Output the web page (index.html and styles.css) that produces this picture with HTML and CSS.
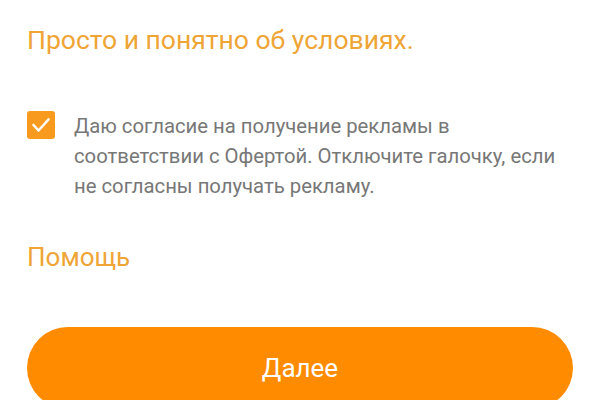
FILE: index.html
```html
<!DOCTYPE html>
<html lang="ru">
  <head>
    <meta charset="UTF-8" />
    <meta name="viewport" content="width=device-width, initial-scale=1.0" />
    <title>Условия</title>
    <link rel="stylesheet" href="styles.css">
  </head>
  <body>
    <div class="container">
      <h1 class="title">Просто и понятно об условиях.</h1>

      <!-- Согласие на рекламу -->
      <label class="consent">
        <span class="checkbox">
          <svg viewBox="0 0 28 28" width="28" height="28">
            <path d="M6.5 14 L11.5 19.5 L21.5 8.5" fill="none" stroke="#fff" stroke-width="2.6" stroke-linecap="round" stroke-linejoin="round" />
          </svg>
        </span>
        <span class="consent-text">Даю согласие на получение рекламы в соответствии с Офертой. Отключите галочку, если не согласны получать рекламу.</span>
      </label>

      <a class="help" href="#">Помощь</a>

      <button class="next-btn">Далее</button>
    </div>
  </body>
</html>
```

FILE: styles.css
```css
body {
  font-family: Roboto, "Noto Sans", sans-serif;
  margin: 0;
  background-color: #fff;
}
.container {
  display: flex;
  flex-direction: column;
  padding: 0 27px;
}
.title {
  margin: 25px 0 0;
  font-size: 26.5px;
  font-weight: 400;
  line-height: 30px;
  color: #eea535;
}
.consent {
  display: flex;
  gap: 19px;
  margin-top: 56px;
}
.checkbox {
  flex: none;
  width: 28px;
  height: 28px;
  border-radius: 3px;
  background-color: #f79a1e;
}
.checkbox svg {
  display: block;
}
.consent-text {
  font-size: 20.3px;
  line-height: 30px;
  color: #777;
}
.help {
  margin-top: 41px;
  font-size: 26px;
  line-height: 30px;
  color: #eea535;
  text-decoration: none;
}
.next-btn {
  margin-top: 55px;
  height: 82px;
  border: none;
  border-radius: 41px;
  background-color: #ff8c00;
  color: #fff;
  font-family: inherit;
  font-size: 26px;
  cursor: pointer;
}
```
